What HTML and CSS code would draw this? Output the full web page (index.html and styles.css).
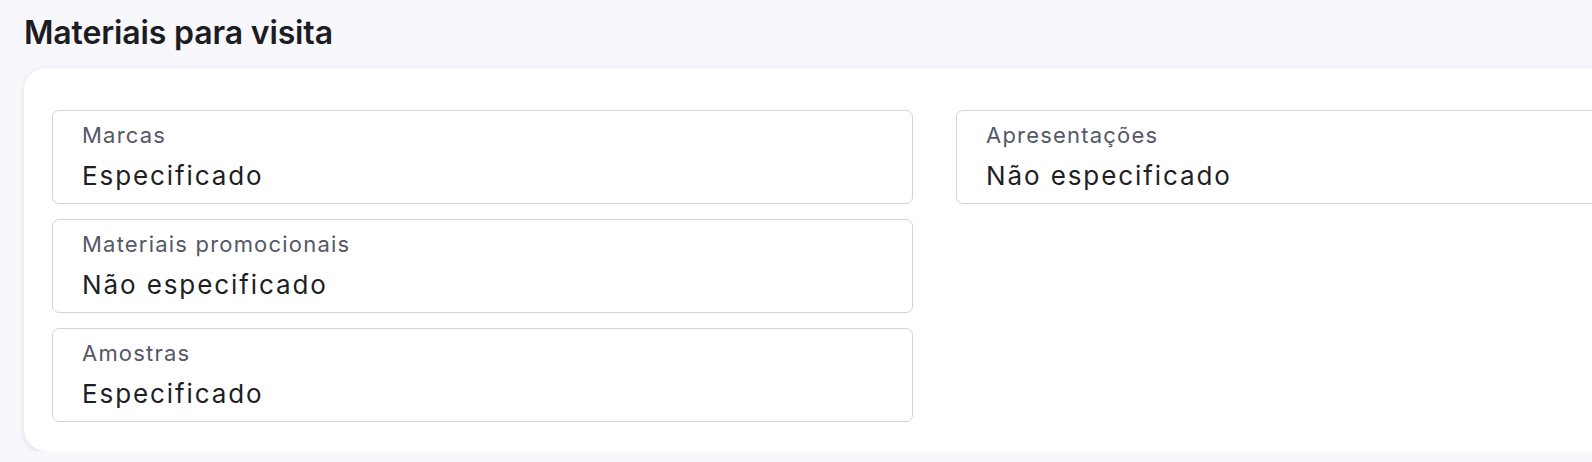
FILE: index.html
```html
<!DOCTYPE html>
<html lang="pt">
<head>
<meta charset="utf-8">
<link rel="stylesheet" href="styles.css">
</head>
<body>
<div class="page">
  <h2 class="title">Materiais para visita</h2>
  <div class="card">
    <div class="grid">
      <div class="col">
        <div class="field"><div class="label">Marcas</div><div class="value">Especificado</div></div>
        <div class="field"><div class="label">Materiais promocionais</div><div class="value">Não especificado</div></div>
        <div class="field"><div class="label">Amostras</div><div class="value">Especificado</div></div>
      </div>
      <div class="col">
        <div class="field"><div class="label">Apresentações</div><div class="value">Não especificado</div></div>
      </div>
    </div>
  </div>
</div>
</body>
</html>
```
FILE: styles.css
```css
html, body {
  margin: 0;
  padding: 0;
  background: #f8f7fc;
  overflow: hidden;
}
.page {
  width: 1900px;
  padding: 13px 0 0 24px;
  font-family: Inter, "Noto Sans", sans-serif;
}
.title {
  margin: 0 0 15px 0;
  font-size: 32px;
  line-height: 40px;
  font-weight: 600;
  color: #1c1d22;
  letter-spacing: -0.15px;
}
.card {
  width: fit-content;
  background: #ffffff;
  border-radius: 22px;
  box-shadow: 0 2px 6px rgba(30, 30, 70, 0.11);
  padding: 42px 28px 29px 28px;
}
.grid {
  display: grid;
  grid-template-columns: 861px 861px;
  column-gap: 43px;
  align-items: start;
}
.col {
  display: flex;
  flex-direction: column;
  gap: 15px;
}
.field {
  border: 1px solid #d1d2e4;
  border-radius: 7px;
  height: 94px;
  box-sizing: border-box;
  padding: 11px 29px 0 29px;
}
.label {
  font-size: 22px;
  line-height: 26px;
  color: #555866;
  letter-spacing: 1.2px;
}
.value {
  margin-top: 13px;
  font-size: 26px;
  line-height: 30px;
  color: #1e1f25;
  letter-spacing: 1.9px;
}
```
